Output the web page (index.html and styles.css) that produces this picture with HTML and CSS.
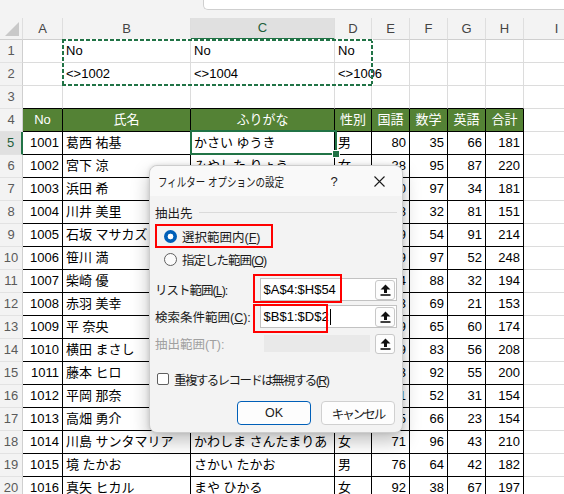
FILE: index.html
```html
<!DOCTYPE html>
<html lang="ja">
  <head>
    <meta charset="UTF-8" />
    <meta name="viewport" content="width=device-width, initial-scale=1.0" />
    <title>フィルター オプションの設定</title>
    <link rel="stylesheet" href="styles.css">
  </head>
  <body>
    <div class="topbar">
      <div class="formula-box"></div>
    </div>
    <div class="sheet-wrap">
      <table class="sheet">
        <thead>
          <tr>
            <th class="corner w-rh">
              <svg width="23" height="21" viewBox="0 0 23 21"><path d="M5 18 L19 18 L19 4 Z" fill="#c9c9c9"/></svg>
            </th>
            <th class="w-a">A</th>
            <th class="w-b">B</th>
            <th class="w-c sel">C</th>
            <th class="w-d">D</th>
            <th class="w-n">E</th>
            <th class="w-n">F</th>
            <th class="w-n">G</th>
            <th class="w-n">H</th>
            <th class="w-i">I</th>
          </tr>
        </thead>
        <tbody>
          <tr><th>1</th><td></td><td>No</td><td>No</td><td>No</td><td></td><td></td><td></td><td></td><td></td></tr>
          <tr><th>2</th><td></td><td>&lt;&gt;1002</td><td>&lt;&gt;1004</td><td>&lt;&gt;1006</td><td></td><td></td><td></td><td></td><td></td></tr>
          <tr class="above"><th>3</th><td></td><td></td><td></td><td></td><td></td><td></td><td></td><td></td><td class="free"></td></tr>
          <tr class="head"><th>4</th><td>No</td><td>氏名</td><td>ふりがな</td><td>性別</td><td>国語</td><td>数学</td><td>英語</td><td>合計</td><td class="free"></td></tr>
          <tr class="data"><th class="sel-row">5</th><td class="n">1001</td><td>葛西 祐基</td><td>かさい ゆうき</td><td>男</td><td class="n">80</td><td class="n">35</td><td class="n">66</td><td class="n">181</td><td class="free"></td></tr>
          <tr class="data"><th>6</th><td class="n">1002</td><td>宮下 涼</td><td>みやした りょう</td><td>女</td><td class="n">38</td><td class="n">95</td><td class="n">87</td><td class="n">220</td><td class="free"></td></tr>
          <tr class="data"><th>7</th><td class="n">1003</td><td>浜田 希</td><td>はまだ のぞみ</td><td>女</td><td class="n">50</td><td class="n">97</td><td class="n">34</td><td class="n">181</td><td class="free"></td></tr>
          <tr class="data"><th>8</th><td class="n">1004</td><td>川井 美里</td><td>かわい みさと</td><td>女</td><td class="n">38</td><td class="n">32</td><td class="n">81</td><td class="n">151</td><td class="free"></td></tr>
          <tr class="data"><th>9</th><td class="n">1005</td><td>石坂 マサカズ</td><td>いしざか まさかず</td><td>男</td><td class="n">69</td><td class="n">54</td><td class="n">91</td><td class="n">214</td><td class="free"></td></tr>
          <tr class="data"><th>10</th><td class="n">1006</td><td>笹川 満</td><td>ささがわ みつる</td><td>男</td><td class="n">99</td><td class="n">97</td><td class="n">52</td><td class="n">248</td><td class="free"></td></tr>
          <tr class="data"><th>11</th><td class="n">1007</td><td>柴崎 優</td><td>しばさき ゆう</td><td>男</td><td class="n">74</td><td class="n">88</td><td class="n">32</td><td class="n">194</td><td class="free"></td></tr>
          <tr class="data"><th>12</th><td class="n">1008</td><td>赤羽 美幸</td><td>あかばね みゆき</td><td>女</td><td class="n">63</td><td class="n">69</td><td class="n">21</td><td class="n">153</td><td class="free"></td></tr>
          <tr class="data"><th>13</th><td class="n">1009</td><td>平 奈央</td><td>たいら なお</td><td>女</td><td class="n">49</td><td class="n">65</td><td class="n">60</td><td class="n">174</td><td class="free"></td></tr>
          <tr class="data"><th>14</th><td class="n">1010</td><td>横田 まさし</td><td>よこた まさし</td><td>男</td><td class="n">69</td><td class="n">83</td><td class="n">56</td><td class="n">208</td><td class="free"></td></tr>
          <tr class="data"><th>15</th><td class="n">1011</td><td>藤本 ヒロ</td><td>ふじもと ひろ</td><td>男</td><td class="n">53</td><td class="n">92</td><td class="n">55</td><td class="n">200</td><td class="free"></td></tr>
          <tr class="data"><th>16</th><td class="n">1012</td><td>平岡 那奈</td><td>ひらおか なな</td><td>女</td><td class="n">71</td><td class="n">52</td><td class="n">31</td><td class="n">154</td><td class="free"></td></tr>
          <tr class="data"><th>17</th><td class="n">1013</td><td>高畑 勇介</td><td>たかはた ゆうすけ</td><td>男</td><td class="n">65</td><td class="n">66</td><td class="n">23</td><td class="n">154</td><td class="free"></td></tr>
          <tr class="data"><th>18</th><td class="n">1014</td><td>川島 サンタマリア</td><td>かわしま さんたまりあ</td><td>女</td><td class="n">71</td><td class="n">96</td><td class="n">43</td><td class="n">210</td><td class="free"></td></tr>
          <tr class="data"><th>19</th><td class="n">1015</td><td>境 たかお</td><td>さかい たかお</td><td>男</td><td class="n">76</td><td class="n">64</td><td class="n">42</td><td class="n">182</td><td class="free"></td></tr>
          <tr class="data"><th>20</th><td class="n">1016</td><td>真矢 ヒカル</td><td>まや ひかる</td><td>女</td><td class="n">92</td><td class="n">38</td><td class="n">67</td><td class="n">197</td><td class="free"></td></tr>
        </tbody>
      </table>

      <!-- copy range and active cell drawn over the grid -->
      <div class="ants"></div>
      <div class="active-cell"></div>

      <div class="dialog">
        <div class="dlg-title">
          <span class="dlg-title-slot"><span class="dlg-title-text">フィルター オプションの設定</span></span>
          <span class="dlg-help">?</span>
          <span class="dlg-close">
            <svg width="11" height="11" viewBox="0 0 11 11"><path d="M0.5 0.5 L10.5 10.5 M10.5 0.5 L0.5 10.5" stroke="#1b1b1b" stroke-width="1.1"/></svg>
          </span>
        </div>
        <div class="dlg-body">
          <div class="group-head"><span>抽出先</span><span class="group-line"></span></div>
          <div class="radio-row marked">
            <span class="radio on"></span><span>選択範囲内(<u>F</u>)</span>
          </div>
          <div class="radio-row">
            <span class="radio"></span><span class="kana">指定した範囲(<u>O</u>)</span>
          </div>

          <div class="field-row first">
            <span class="field-label"><span class="kana">リスト範囲(<u>L</u>):</span></span>
            <div class="field-input">
              <span class="field-text">$A$4:$H$54</span>
              <span class="pick"><svg width="11" height="12" viewBox="0 0 11 12"><path d="M5.5 0.5 L10.5 5.5 L7 5.5 L7 9 L4 9 L4 5.5 L0.5 5.5 Z" fill="#111"/><rect x="0.5" y="10.2" width="10" height="1.6" fill="#111"/></svg></span>
            </div>
          </div>
          <div class="field-row">
            <span class="field-label">検索条件範囲(<u>C</u>):</span>
            <div class="field-input">
              <span class="field-text">$B$1:$D$2<span class="caret"></span></span>
              <span class="pick"><svg width="11" height="12" viewBox="0 0 11 12"><path d="M5.5 0.5 L10.5 5.5 L7 5.5 L7 9 L4 9 L4 5.5 L0.5 5.5 Z" fill="#111"/><rect x="0.5" y="10.2" width="10" height="1.6" fill="#111"/></svg></span>
            </div>
          </div>
          <div class="field-row">
            <span class="field-label off">抽出範囲(T):</span>
            <div class="field-input off">
              <span class="off-fill"></span>
              <span class="pick"><svg width="11" height="12" viewBox="0 0 11 12"><path d="M5.5 0.5 L10.5 5.5 L7 5.5 L7 9 L4 9 L4 5.5 L0.5 5.5 Z" fill="#111"/><rect x="0.5" y="10.2" width="10" height="1.6" fill="#111"/></svg></span>
            </div>
          </div>

          <div class="check-row">
            <span class="checkbox"></span><span class="kana-check">重複するレコードは無視する(<u>R</u>)</span>
          </div>

          <div class="btn-row">
            <button class="btn primary">OK</button>
            <button class="btn"><span class="kana-tight">キャンセル</span></button>
          </div>
        </div>
        <div class="mark mark-list"></div>
        <div class="mark mark-crit"></div>
      </div>
    </div>
  </body>
</html>
```

FILE: styles.css
```css
* {
  box-sizing: border-box;
}
html,
body {
  margin: 0;
  padding: 0;
}
body {
  width: 564px;
  height: 494px;
  overflow: hidden;
  background: #fff;
  font-family: "Liberation Sans", "Noto Sans CJK JP", sans-serif;
  color: #000;
}

/* top strip with the formula bar edge */
.topbar {
  height: 18px;
  background: #f3f3f3;
  padding-left: 203px;
}
.formula-box {
  height: 10px;
  background: #fff;
  border: 1px solid #cfcfcf;
  border-top: none;
  border-right: none;
  border-bottom-left-radius: 5px;
}

.sheet-wrap {
  position: relative;
}

/* grid */
.sheet {
  border-collapse: separate;
  border-spacing: 0;
  table-layout: fixed;
  width: 590px;
  font-size: 13px;
}
.sheet th,
.sheet td {
  padding: 0;
  white-space: nowrap;
  overflow: visible;
  line-height: 20px;
}
.sheet thead th {
  height: 21px;
  background: #f3f3f3;
  color: #444;
  font-weight: normal;
  font-size: 13px;
  border-right: 1px solid #dedede;
  border-bottom: 1px solid #cfcfcf;
  text-align: center;
}
.sheet thead th.sel {
  background: #e0e0e0;
  color: #1e5e3b;
  border-bottom: 2px solid #217346;
}
.sheet thead th.corner {
  position: relative;
  padding: 0;
}
.corner svg {
  display: block;
}
.w-rh { width: 23px; }
.w-a { width: 40px; }
.w-b { width: 128px; }
.w-c { width: 144px; }
.w-d { width: 37px; }
.w-n { width: 38px; }
.w-i { width: 66px; }

.sheet tbody tr {
  height: 23px;
}
.sheet tbody th {
  background: #f3f3f3;
  color: #5a5a5a;
  font-weight: normal;
  font-size: 13px;
  text-align: center;
  border-right: 1px solid #cfcfcf;
  border-bottom: 1px solid #e2e2e2;
}
.sheet tbody th.sel-row {
  background: #e0e0e0;
  color: #1e5e3b;
  border-right: 2px solid #217346;
}
.sheet td {
  padding-left: 3px;
  padding-right: 3px;
  border-right: 1px solid #dcdcdc;
  border-bottom: 1px solid #dcdcdc;
  vertical-align: middle;
}

/* bordered list */
.above td {
  border-bottom-color: #000;
}
.above td.free {
  border-bottom-color: #dcdcdc;
}
.head td,
.data td {
  border-right-color: #000;
  border-bottom-color: #000;
}
.head td {
  background: #548235;
  color: #fff;
  text-align: center;
}
.head td.free,
.data td.free {
  background: none;
  border-right-color: #dcdcdc;
  border-bottom-color: #dcdcdc;
}
.data td.n {
  text-align: right;
}

/* marching ants round B1:D2 */
.ants {
  position: absolute;
  left: 62px;
  top: 21px;
  width: 311px;
  height: 47px;
  background:
    repeating-linear-gradient(90deg, #217346 0 4px, #fff 4px 6px) left top / 100% 2px no-repeat,
    repeating-linear-gradient(90deg, #217346 0 4px, #fff 4px 6px) left bottom / 100% 2px no-repeat,
    repeating-linear-gradient(180deg, #217346 0 4px, #fff 4px 6px) left top / 2px 100% no-repeat,
    repeating-linear-gradient(180deg, #217346 0 4px, #fff 4px 6px) right top / 2px 100% no-repeat;
}
.active-cell {
  position: absolute;
  left: 190px;
  top: 112px;
  width: 147px;
  height: 25px;
  border: 2px solid #217346;
}
.active-cell::after {
  content: "";
  position: absolute;
  right: -5px;
  bottom: -5px;
  width: 6px;
  height: 6px;
  background: #217346;
  border: 1px solid #fff;
}

/* dialog */
.dialog {
  position: absolute;
  left: 149px;
  top: 147px;
  width: 254px;
  height: 268px;
  background: #f3f3f3;
  border: 1px solid #cdcdcd;
  border-radius: 8px;
  box-shadow: 0 8px 18px rgba(0, 0, 0, 0.25), 0 0 4px rgba(0, 0, 0, 0.12);
  font-size: 12.5px;
  color: #1b1b1b;
}
.kana {
  letter-spacing: -1px;
}
.kana-tight {
  letter-spacing: -2px;
}
.kana-check {
  letter-spacing: -1.6px;
}
.dlg-title {
  height: 30px;
  display: flex;
  align-items: center;
  padding-left: 8px;
  background: #f9f9f9;
  border-radius: 8px 8px 0 0;
}
.dlg-title-slot {
  flex: 1 1 0;
  min-width: 0;
  white-space: nowrap;
}
.dlg-title-text {
  display: inline-block;
  transform: scaleX(0.76);
  transform-origin: left center;
}
.dlg-help {
  flex: none;
  width: 46px;
  padding-left: 2px;
  text-align: center;
  font-size: 13px;
}
.dlg-close {
  flex: none;
  width: 46px;
  display: flex;
  justify-content: center;
}
.dlg-body {
  padding: 6px 5px 0 5px;
  display: flex;
  flex-direction: column;
}
.group-head {
  height: 20px;
  display: flex;
  align-items: center;
}
.group-line {
  flex: 1;
  height: 1px;
  background: #dadada;
  margin-left: 6px;
  margin-right: 0;
}
.radio-row {
  height: 23px;
  display: flex;
  align-items: center;
  padding-left: 9px;
  gap: 5px;
}
.radio-row.marked {
  margin-top: 2px;
  height: 24px;
  width: 118px;
  padding-left: 7px;
  border: 2px solid #f00;
}
.radio {
  width: 13px;
  height: 13px;
  border-radius: 50%;
  border: 1px solid #5f5f5f;
  background: #fbfbfb;
}
.radio.on {
  border: none;
  background: radial-gradient(circle, #fff 0 2.6px, #005fb8 3.2px);
}
.field-row {
  height: 23px;
  display: flex;
  align-items: center;
  margin-top: 4px;
}
.field-row.first {
  margin-top: 7px;
}
.field-label {
  width: 105px;
}
.field-label.off {
  color: #a0a0a0;
}
.field-input {
  width: 138px;
  height: 23px;
  display: flex;
  align-items: center;
  background: #fff;
  border: 1px solid #c2c2c2;
  padding-left: 3px;
  padding-right: 1px;
  font-size: 13px;
  color: #000;
  letter-spacing: 0;
}
.field-input.off {
  background: none;
  border-color: transparent;
}
.field-text {
  flex: 1;
  display: flex;
  align-items: center;
}
.caret {
  width: 1px;
  height: 16px;
  background: #000;
  margin-left: 1px;
}
.off-fill {
  flex: 1;
  height: 17px;
  background: #e9e9e9;
  margin-right: 5px;
}
.pick {
  width: 20px;
  height: 20px;
  border: 1px solid #c8c8c8;
  border-radius: 3px;
  background: #fdfdfd;
  display: flex;
  align-items: center;
  justify-content: center;
}
.check-row {
  height: 20px;
  margin-top: 14px;
  display: flex;
  align-items: center;
  padding-left: 2px;
  gap: 5px;
}
.checkbox {
  width: 12px;
  height: 12px;
  border: 1px solid #5f5f5f;
  border-radius: 2px;
  background: #fff;
}
.btn-row {
  margin-top: 12px;
  display: flex;
  justify-content: flex-end;
  gap: 10px;
  padding-right: 2px;
}
.btn {
  height: 24px;
  width: 74px;
  background: #fdfdfd;
  border: 1px solid #d0d0d0;
  border-radius: 4px;
  font-family: "Liberation Sans", "Noto Sans CJK JP", sans-serif;
  font-size: 12.5px;
  color: #1b1b1b;
  padding: 0;
}
.btn.primary {
  border-color: #005fb8;
}

/* red annotation boxes */
.mark {
  position: absolute;
  border: 2px solid #f00;
}
.mark-list {
  left: 103px;
  top: 108px;
  width: 89px;
  height: 29px;
}
.mark-crit {
  left: 103px;
  top: 138px;
  width: 75px;
  height: 29px;
}
```
